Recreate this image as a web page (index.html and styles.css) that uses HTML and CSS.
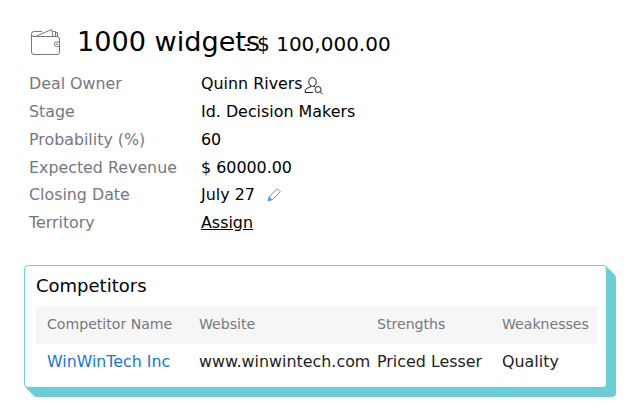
FILE: index.html
```html
<!DOCTYPE html>
<html lang="en">
<head>
  <meta charset="UTF-8">
  <meta name="viewport" content="width=device-width, initial-scale=1.0">
  <title>1000 widgets</title>
  <link rel="stylesheet" href="styles.css">
</head>
<body>

  <div class="deal-header">
    <svg class="wallet-icon" width="32" height="28" viewBox="0 0 32 28">
      <path d="M3.5 8.5H27Q29.500 8.500 29.500 11V24Q29.500 26.500 27 26.500H4Q1.500 26.500 1.500 24V6Q1.500 3.500 4 3.500H12M1.500 6.500Q1.500 8.500 4 8.500M6.500 8L21.500 1.500L23 8M22.500 3.500H25.500V8M25.500 4.500H27.500V8.500M29.500 14H26.500Q24.500 14 24.500 16.200T26.500 18.500H29.500"/>
      <circle cx="27" cy="16.300" r="0.500"/>
    </svg>
    <h1 class="deal-name">1000 widgets</h1>
    <span class="deal-amount">- $ 100,000.00</span>
  </div>

  <dl class="details">
    <dt>Deal Owner</dt>
    <dd>Quinn Rivers<svg class="owner-icon" width="20" height="18" viewBox="0 0 20 18">
      <ellipse cx="8.500" cy="5" rx="3.700" ry="4.300"/>
      <path d="M6.500 8.500V10L2.500 11.500Q1 12.500 1 15.500H9M10.500 8.500V10"/>
      <circle cx="14" cy="12.500" r="3"/>
      <path d="M16.200 14.700L18.500 17"/>
    </svg></dd>
    <dt>Stage</dt>
    <dd>Id. Decision Makers</dd>
    <dt>Probability (%)</dt>
    <dd>60</dd>
    <dt>Expected Revenue</dt>
    <dd>$ 60000.00</dd>
    <dt>Closing Date</dt>
    <dd>July 27<svg class="edit-icon" width="14" height="14" viewBox="0 0 14 14">
      <path d="M2 9L10.300 0.800L13.200 3.700L5 12Z"/>
      <path class="tip" d="M1.500 9L5 12.300L0.500 13.500Z"/>
    </svg></dd>
    <dt>Territory</dt>
    <dd><a class="assign" href="#">Assign</a></dd>
  </dl>

  <div class="competitors">
    <h2>Competitors</h2>
    <table>
      <tr>
        <th class="col-name">Competitor Name</th>
        <th class="col-site">Website</th>
        <th class="col-strengths">Strengths</th>
        <th>Weaknesses</th>
      </tr>
      <tr>
        <td><a href="#">WinWinTech Inc</a></td>
        <td>www.winwintech.com</td>
        <td>Priced Lesser</td>
        <td>Quality</td>
      </tr>
    </table>
  </div>

</body>
</html>
```

FILE: styles.css
```css
* {
  box-sizing: border-box;
}

body {
  margin: 0;
  min-height: 420px;
  padding: 24px 24px 0;
  background-color: #fff;
  color: #000;
  font-family: "DejaVu Sans", sans-serif;
  font-size: 15.9px;
}

svg {
  fill: none;
  stroke-width: 1;
  flex: none;
}

.deal-header {
  display: flex;
  align-items: baseline;
  height: 46px;
  padding-left: 6px;
}

.wallet-icon {
  align-self: flex-start;
  margin-top: 4px;
  stroke: #777;
}

.deal-name {
  width: 166.500px;
  margin: 0 0 0 15px;
  font-size: 27.100px;
  font-weight: normal;
  line-height: 36px;
  white-space: nowrap;
}

.deal-amount {
  font-size: 20px;
  white-space: nowrap;
}

.details {
  display: grid;
  grid-template-columns: 172px auto;
  grid-auto-rows: 27.750px;
  align-items: center;
  margin: 0;
  padding-left: 5px;
}

.details dt {
  color: #75777f;
  font-size: 15.850px;
}

.details dd {
  display: flex;
  align-items: center;
  margin: 0;
}

.owner-icon {
  margin: 5px 0 0 1.500px;
  stroke: #222;
}

.edit-icon {
  margin-left: 12px;
  stroke: #4a9aea;
}

.edit-icon .tip {
  fill: #4a9aea;
  stroke: none;
}

.assign {
  color: #000;
}

.competitors {
  width: 583px;
  height: 123px;
  margin-top: 28.500px;
  padding: 9px 9px 0 11px;
  border: 1px solid #6bcdd6;
  border-radius: 4px;
  background-color: #fff;
  box-shadow: 1px 1px #6bcdd6, 2px 2px #6bcdd6, 3px 3px #6bcdd6,
    4px 4px #6bcdd6, 5px 5px #6bcdd6, 6px 6px #6bcdd6,
    7px 7px #6bcdd6, 8px 8px #6bcdd6, 9px 9px #6bcdd6;
}

.competitors h2 {
  margin: 0;
  height: 31px;
  font-size: 18px;
  font-weight: normal;
  line-height: 22px;
}

table {
  width: 561px;
  border-collapse: collapse;
  table-layout: fixed;
}

th, td {
  padding: 0 0 0 3px;
  text-align: left;
  white-space: nowrap;
}

th:first-child, td:first-child {
  padding-left: 11px;
}

th {
  height: 38px;
  padding-bottom: 3px;
  background-color: #f6f6f6;
  color: #75777f;
  font-size: 14.100px;
  font-weight: normal;
}

td {
  height: 35px;
  color: #222;
}

td a {
  color: #1a73d9;
  font-size: 15.800px;
  text-decoration: none;
}

.col-name {
  width: 160px;
}

.col-site {
  width: 178px;
}

.col-strengths {
  width: 125px;
}
```
